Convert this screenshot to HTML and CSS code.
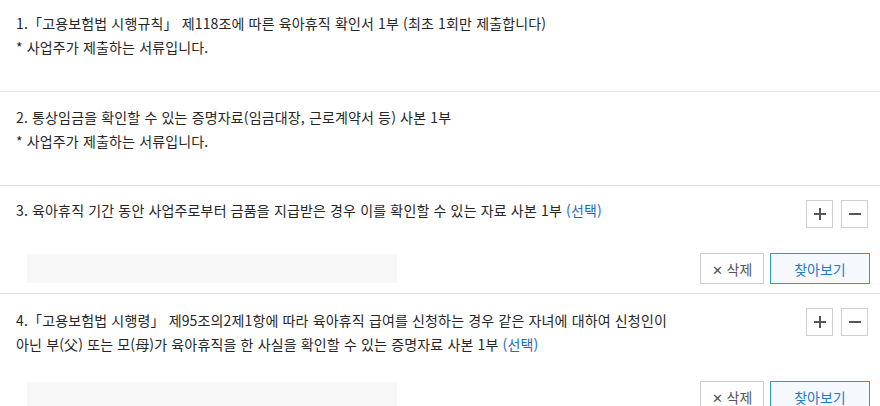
FILE: index.html
```html
<!DOCTYPE html>
<html lang="ko">
<head>
<meta charset="utf-8">
<link rel="stylesheet" href="styles.css">
</head>
<body>
<ul class="doc-list">
  <li class="doc doc-first">
    <div class="doc-head">
      <p class="doc-text">1.「고용보험법 시행규칙」 제118조에 따른 육아휴직 확인서 1부 (최초 1회만 제출합니다)<br>* 사업주가 제출하는 서류입니다.</p>
    </div>
  </li>
  <li class="doc">
    <div class="doc-head">
      <p class="doc-text">2. 통상임금을 확인할 수 있는 증명자료(임금대장, 근로계약서 등) 사본 1부<br>* 사업주가 제출하는 서류입니다.</p>
    </div>
  </li>
  <li class="doc doc-file">
    <div class="doc-head">
      <p class="doc-text">3. 육아휴직 기간 동안 사업주로부터 금품을 지급받은 경우 이를 확인할 수 있는 자료 사본 1부 <span class="opt">(선택)</span></p>
      <div class="pm">
        <button class="pm-btn" type="button">
          <svg width="14" height="14" viewBox="0 0 14 14"><path d="M7 1v12M1 7h12" stroke="#555" stroke-width="2"/></svg>
        </button>
        <button class="pm-btn" type="button">
          <svg width="14" height="14" viewBox="0 0 14 14"><path d="M1 7h12" stroke="#555" stroke-width="2"/></svg>
        </button>
      </div>
    </div>
    <div class="file-row">
      <div class="file-box"></div>
      <div class="file-actions">
        <button class="btn-del" type="button"><span class="x">✕</span> 삭제</button>
        <button class="btn-find" type="button">찾아보기</button>
      </div>
    </div>
  </li>
  <li class="doc doc-file doc-last">
    <div class="doc-head">
      <p class="doc-text">4.「고용보험법 시행령」 제95조의2제1항에 따라 육아휴직 급여를 신청하는 경우 같은 자녀에 대하여 신청인이<br>아닌 부(父) 또는 모(母)가 육아휴직을 한 사실을 확인할 수 있는 증명자료 사본 1부 <span class="opt">(선택)</span></p>
      <div class="pm pm-top">
        <button class="pm-btn" type="button">
          <svg width="14" height="14" viewBox="0 0 14 14"><path d="M7 1v12M1 7h12" stroke="#555" stroke-width="2"/></svg>
        </button>
        <button class="pm-btn" type="button">
          <svg width="14" height="14" viewBox="0 0 14 14"><path d="M1 7h12" stroke="#555" stroke-width="2"/></svg>
        </button>
      </div>
    </div>
    <div class="file-row">
      <div class="file-box"></div>
      <div class="file-actions">
        <button class="btn-del" type="button"><span class="x">✕</span> 삭제</button>
        <button class="btn-find" type="button">찾아보기</button>
      </div>
    </div>
  </li>
</ul>
</body>
</html>
```

FILE: styles.css
```css
html, body {
  margin: 0;
  padding: 0;
  background: #fff;
  overflow: hidden;
}
body {
  font-family: "Noto Sans CJK KR", "Noto Sans", sans-serif;
  font-size: 14px;
  color: #262626;
  letter-spacing: 0.15px;
}
.doc-list {
  list-style: none;
  margin: 0;
  padding: 0;
}
.doc {
  border-bottom: 1px solid #e3e3e3;
  padding: 13px 10px 32px 16px;
  height: 48px;
}
.doc-first {
  padding-top: 11px;
  height: 48px;
}
.doc-file {
  padding-top: 12px;
  padding-bottom: 9px;
  height: auto;
}
.doc-last {
  padding-top: 14px;
}
.doc-head {
  display: flex;
  justify-content: space-between;
  align-items: flex-start;
}
.doc-text {
  margin: 0;
  line-height: 24px;
}
.opt {
  color: #1c6cc0;
}
.pm {
  display: flex;
  gap: 8px;
  margin-top: 2px;
  margin-right: 2px;
}
.pm-top {
  margin-top: 0;
}
.pm-btn {
  width: 27px;
  height: 28px;
  padding: 0;
  border: 1px solid #cfcfcf;
  background: #fff;
  display: flex;
  align-items: center;
  justify-content: center;
  cursor: pointer;
}
.file-row {
  display: flex;
  justify-content: space-between;
  align-items: center;
  margin-top: 25px;
}
.file-box {
  width: 370px;
  height: 29px;
  margin-left: 11px;
  background: #f8f8f8;
}
.file-actions {
  display: flex;
  gap: 6px;
}
.btn-del, .btn-find {
  font-family: inherit;
  font-size: 14px;
  height: 31px;
  padding: 0;
  cursor: pointer;
}
.btn-del {
  width: 64px;
  border: 1px solid #cccccc;
  background: #fff;
  color: #555;
}
.btn-del .x {
  font-size: 13px;
}
.btn-find {
  width: 100px;
  border: 1px solid #3a93d6;
  background: #f5f9fd;
  color: #2a78c2;
}
```
